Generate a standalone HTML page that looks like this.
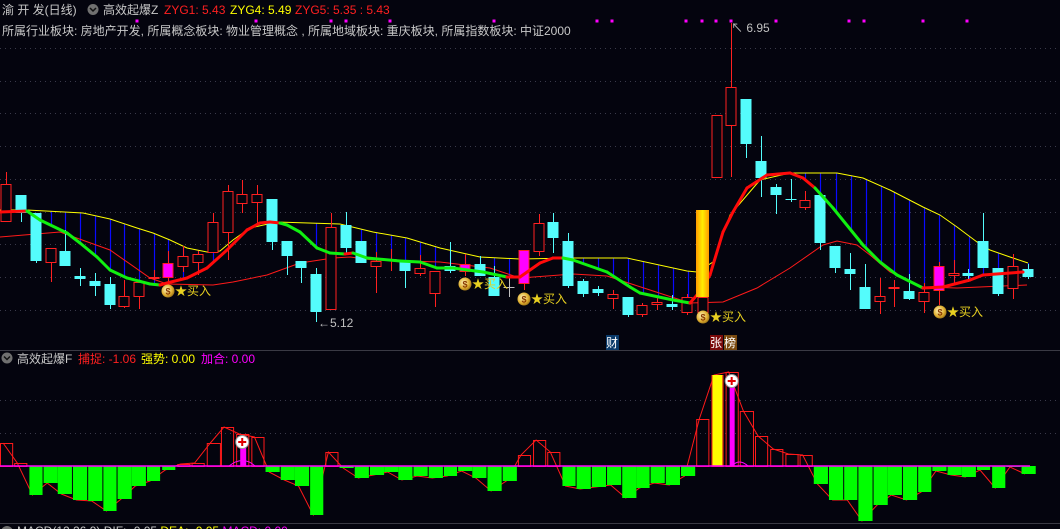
<!DOCTYPE html>
<html><head><meta charset="utf-8">
<style>
html,body{margin:0;padding:0;background:#04040e;width:1060px;height:529px;overflow:hidden}
svg{display:block}
text{font-family:"Liberation Sans","Noto Sans CJK SC",sans-serif}
</style></head>
<body>
<svg id="s" width="1060" height="529" viewBox="0 0 1060 529" xmlns="http://www.w3.org/2000/svg">
<defs>
<linearGradient id="og" x1="0" x2="1" y1="0" y2="0">
<stop offset="0" stop-color="#ff9a00"/><stop offset="0.5" stop-color="#ffee00"/><stop offset="1" stop-color="#ff9a00"/></linearGradient>
<radialGradient id="bag" cx="0.4" cy="0.4" r="0.7"><stop offset="0" stop-color="#fff6c0"/><stop offset="0.6" stop-color="#e0b030"/><stop offset="1" stop-color="#8a6010"/></radialGradient>
</defs>
<g id="grid" stroke="#3a3a4a" stroke-dasharray="1,4" stroke-width="1"></g>
<line x1="0" y1="350.5" x2="1060" y2="350.5" stroke="#3a3a44"/>
<line x1="0" y1="523.5" x2="1060" y2="523.5" stroke="#3a3a44"/>
<g id="g"></g>
<!-- header -->
<text x="2" y="14" font-size="12" fill="#c8c8c8">渝 开 发(日线)</text>
<circle cx="93" cy="9.5" r="5.5" fill="#707070"/><path d="M90 8 L93 11 L96 8" stroke="#111" stroke-width="1.5" fill="none"/>
<text x="103" y="14" font-size="12" fill="#c8c8c8">高效起爆Z</text>
<text x="164" y="14" font-size="12" fill="#ff2020">ZYG1: 5.43</text>
<text x="230" y="14" font-size="12" fill="#ffff00">ZYG4: 5.49</text>
<text x="295" y="14" font-size="12" fill="#ff2020">ZYG5: 5.35 : 5.43</text>
<text x="2" y="35" font-size="12" fill="#c8c8c8">所属行业板块: 房地产开发, 所属概念板块: 物业管理概念 , 所属地域板块: 重庆板块, 所属指数板块: 中证2000</text>
<circle cx="7" cy="358" r="5.5" fill="#707070"/><path d="M4 356.5 L7 359.5 L10 356.5" stroke="#111" stroke-width="1.5" fill="none"/>
<text x="17" y="363" font-size="12" fill="#c8c8c8">高效起爆F</text>
<text x="78" y="363" font-size="12" fill="#ff2020">捕捉: -1.06</text>
<text x="141" y="363" font-size="12" fill="#ffff00">强势: 0.00</text>
<text x="201" y="363" font-size="12" fill="#ff00ff">加合: 0.00</text>
<circle cx="7" cy="532" r="6" fill="#707070"/>
<text x="17" y="535" font-size="12" fill="#c8c8c8">MACD(12,26,9) DIF: -0.05 <tspan fill="#ffff00">DEA: -0.05</tspan> <tspan fill="#ff00ff">MACD: 0.00</tspan></text>
<!-- labels -->
<text x="318" y="327" font-size="12" fill="#c0c0c0">←5.12</text>
<text x="731" y="32" font-size="12" fill="#c0c0c0">↖ 6.95</text>
<rect x="606" y="335" width="13" height="15" fill="#0a3a6a"/><text x="606" y="347" font-size="12" fill="#fff">财</text>
<rect x="710" y="335" width="13" height="15" fill="#7a0a0a"/><text x="710" y="347" font-size="12" fill="#fff">张</text>
<rect x="724" y="335" width="13" height="15" fill="#7a4a10"/><text x="724" y="347" font-size="12" fill="#fff">榜</text>
</svg>
<script>
var NS="http://www.w3.org/2000/svg",G=document.getElementById('g'),GR=document.getElementById('grid');
function el(t,a,p){var e=document.createElementNS(NS,t);for(var k in a)e.setAttribute(k,a[k]);(p||G).appendChild(e);return e;}
[48,81,113,146,179,212,244,277,310,400,433].forEach(function(y){el('line',{x1:0,x2:1060,y1:y+.5,y2:y+.5},GR);});
function interp(P,x){for(var i=1;i<P.length;i++){if(x<=P[i][0]){var a=P[i-1],b=P[i];return a[1]+(b[1]-a[1])*(x-a[0])/(b[0]-a[0]);}}return P[P.length-1][1];}
var Y=[[0,210],[27,210],[83,213],[110,219],[137,228],[153,233],[170,240],[187,248],[207,252],[220,251],[233,240],[250,228],[277,222],[340,224],[373,232],[407,238],[440,248],[480,257],[520,259],[573,258],[627,258],[687,271],[697,272],[713,262],[730,215],[760,180],[790,173],[837,173],[863,178],[890,190],[923,207],[940,215],[957,227],[977,242],[990,250],[1010,257],[1028,263]];
var T=[[0,212,'r'],[27,211,'r'],[40,220,'g'],[67,233,'g'],[80,243,'g'],[97,257,'g'],[110,270,'g'],[127,278,'g'],[150,284,'g'],[160,285,'g'],[167,283,'r'],[187,278,'r'],[207,268,'r'],[227,250,'r'],[247,230,'r'],[260,223,'r'],[270,222,'r'],[280,223,'r'],[287,225,'g'],[300,232,'g'],[317,248,'g'],[330,253,'g'],[345,254,'g'],[353,253,'r'],[367,258,'g'],[400,261,'g'],[420,262,'g'],[437,268,'g'],[453,268,'g'],[483,272,'g'],[507,277,'g'],[520,277,'r'],[540,263,'r'],[553,258,'r'],[563,258,'r'],[573,260,'g'],[607,272,'g'],[630,287,'g'],[640,293,'g'],[673,300,'g'],[690,303,'g'],[697,295,'r'],[710,275,'r'],[723,232,'r'],[733,212,'r'],[747,188,'r'],[767,175,'r'],[790,173,'r'],[803,178,'r'],[815,188,'r'],[833,208,'g'],[863,245,'g'],[880,262,'g'],[897,275,'g'],[923,288,'g'],[943,287,'r'],[970,280,'r'],[983,275,'r'],[1023,272,'r']];
var R2=[[0,237],[60,232],[110,250],[150,278],[167,284],[213,285],[233,282],[267,275],[300,263],[333,258],[350,257],[373,260],[440,262],[490,268],[520,278],[547,276],[573,274],[607,276],[650,290],[690,303],[723,302],[757,288],[790,268],[823,245],[837,241],[857,245],[870,255],[890,272],[923,287],[957,288],[1027,285]];
var blue=[51,65,80,95,110,124,139,154,168,183,198,213,316,331,346,361,376,391,405,420,435,450,465,480,494,509,583,598,613,628,643,658,673,688,805,820,836,851,866,881,894,909,924,939,954,969,983,998,1013,1028];
blue.forEach(function(x){var y1=interp(Y,x),y2=interp(T,x);if(y2>y1+2)el('line',{x1:x+.5,x2:x+.5,y1:y1,y2:y2,stroke:'#0a0aff','stroke-width':1.2});});
el('polyline',{points:R2.map(function(p){return p.join(',')}).join(' '),fill:'none',stroke:'#ff1a1a','stroke-width':1});
el('polyline',{points:Y.map(function(p){return p.join(',')}).join(' '),fill:'none',stroke:'#ffff00','stroke-width':1});
var C=[[6,184,222,172,222,'r'],[21,195,213,195,222,'c'],[36,213,261,213,263,'c'],[51,248,263,248,282,'r'],[65,251,266,230,266,'c'],[80,276,279,268,286,'c'],[95,281,286,273,296,'c'],[110,284,305,277,309,'c'],[124,296,307,280,308,'r'],[139,282,297,282,309,'r'],[154,277,279,270,280,'r'],[168,263,278,251,285,'m'],[183,256,267,246,272,'r'],[198,254,263,251,275,'r'],[213,222,253,213,253,'r'],[228,191,233,185,260,'r'],[242,194,204,180,213,'r'],[257,194,203,185,223,'r'],[272,199,242,199,250,'c'],[287,241,256,241,275,'c'],[301,261,268,261,283,'c'],[316,274,312,268,322,'c'],[331,227,310,213,310,'r'],[346,225,248,212,253,'c'],[361,241,263,241,263,'c'],[376,261,267,252,293,'r'],[391,259,261,249,271,'r'],[405,261,271,261,288,'c'],[420,268,274,255,276,'r'],[435,271,294,271,307,'r'],[450,266,271,242,273,'c'],[465,264,272,254,276,'m'],[480,264,276,256,276,'c'],[494,277,296,266,296,'c'],[509,287,287,277,297,'xg'],[524,250,284,250,290,'m'],[539,223,252,214,256,'r'],[553,222,238,213,253,'c'],[568,241,286,233,288,'c'],[583,281,294,279,297,'c'],[598,289,293,286,296,'c'],[613,294,299,290,309,'r'],[628,297,315,297,317,'c'],[642,305,315,303,317,'r'],[657,302,305,298,310,'r'],[672,304,307,295,310,'c'],[687,297,313,294,315,'r'],[703,297,313,297,313,'r'],[717,115,178,115,178,'r'],[731,87,126,23,177,'r'],[746,99,144,99,158,'c'],[761,161,178,136,197,'c'],[776,187,195,184,214,'c'],[791,199,199,179,202,'xc'],[805,200,208,191,210,'r'],[820,195,243,195,250,'c'],[835,246,268,246,273,'c'],[850,269,274,253,290,'c'],[865,287,309,264,309,'c'],[880,296,302,278,314,'r'],[894,287,289,280,307,'r'],[909,291,299,274,300,'c'],[924,292,302,283,313,'r'],[939,266,291,262,305,'m'],[954,273,276,260,283,'r'],[968,273,276,269,282,'c'],[983,241,268,213,268,'c'],[998,268,294,268,296,'c'],[1013,266,289,254,299,'r'],[1028,269,277,264,279,'c']];
C.forEach(function(c){var x=c[0],t=c[5],w=5.5;
 if(t[0]=='x'){var col=t=='xg'?'#c0c0c0':'#54fcfc';el('line',{x1:x+.5,x2:x+.5,y1:c[3],y2:c[4],stroke:col});el('line',{x1:x-w,x2:x+w,y1:c[1]+.5,y2:c[1]+.5,stroke:col});return;}
 if(t=='c'){el('line',{x1:x+.5,x2:x+.5,y1:c[3],y2:c[4],stroke:'#54fcfc'});el('rect',{x:x-w,y:c[1],width:11,height:Math.max(2,c[2]-c[1]),fill:'#54fcfc'});}
 else{el('line',{x1:x+.5,x2:x+.5,y1:c[3],y2:c[1],stroke:'#ff2020'});el('line',{x1:x+.5,x2:x+.5,y1:c[2],y2:c[4],stroke:'#ff2020'});
  el('rect',{x:x-w+.5,y:c[1]+.5,width:10,height:Math.max(1,c[2]-c[1]-1),fill:t=='m'?'#ff00ff':'#04040e',stroke:'#ff2020','stroke-width':1});}
});
for(var i=1;i<T.length;i++){el('line',{x1:T[i-1][0],y1:T[i-1][1],x2:T[i][0],y2:T[i][1],stroke:T[i][2]=='r'?'#ff0a0a':'#10f010','stroke-width':3,'stroke-linecap':'round'});}
el('rect',{x:696,y:210,width:13,height:87,fill:'url(#og)'});
[137,256,331,346,390,494,597,612,686,702,716,731,776,849,864,923,967].forEach(function(x){el('rect',{x:x-1.5,y:19.5,width:3,height:3,fill:'#ff00ff'});});
[[168,291],[465,284],[524,299],[703,317],[940,312]].forEach(function(p){
 el('circle',{cx:p[0],cy:p[1],r:6.5,fill:'url(#bag)'});
 var t=el('text',{x:p[0],y:p[1]+3.5,'font-size':9,'text-anchor':'middle',fill:'#8a3a00','font-weight':'bold'});t.textContent='$';
 var s=el('text',{x:p[0]+7,y:p[1]+4,'font-size':12,fill:'#e8d020'});s.textContent='★买入';});
var Z=466,B=[[0,12,443,'r'],[14,26,463,'r'],[29,41,495,'g'],[43,56,483,'g'],[57,70,494,'g'],[72,85,500,'g'],[87,100,501,'g'],[102,114,511,'g'],[116,129,499,'g'],[130,143,486,'g'],[145,157,481,'g'],[160,172,470,'g'],[175,187,464,'r'],[189,201,463,'r'],[204,217,443,'r'],[218,230,427,'r'],[233,245,434,'r'],[248,260,437,'r'],[262,275,472,'g'],[277,290,480,'g'],[291,304,486,'g'],[306,318,515,'g'],[321,333,452,'r'],[335,348,468,'g'],[350,363,478,'g'],[365,378,475,'g'],[379,392,472,'g'],[393,406,480,'g'],[408,421,476,'g'],[423,436,478,'g'],[438,450,476,'g'],[452,465,471,'g'],[466,479,478,'g'],[481,494,491,'g'],[496,509,481,'g'],[511,523,455,'r'],[533,545,440,'r'],[547,559,452,'r'],[562,574,486,'g'],[576,589,489,'g'],[591,604,487,'g'],[606,619,485,'g'],[621,634,498,'g'],[635,647,488,'g'],[649,662,483,'g'],[664,677,485,'g'],[679,692,476,'g'],[694,706,419,'r'],[709,720,375,'r'],[723,735,372,'r'],[737,750,411,'r'],[752,764,436,'r'],[767,779,449,'r'],[782,794,454,'r'],[796,808,455,'r'],[810,823,484,'g'],[825,838,500,'g'],[840,852,500,'g'],[854,867,521,'g'],[869,882,505,'g'],[883,896,495,'g'],[898,911,500,'g'],[913,925,492,'g'],[927,940,471,'g'],[942,955,475,'g'],[956,969,477,'g'],[971,983,470,'g'],[986,998,488,'g'],[1000,1013,467,'g'],[1015,1028,474,'g']];
function fx(x){return x<530?x*1.0135:530+(x-530)*1.0135;}
B.forEach(function(b){b[0]=fx(b[0]);b[1]=fx(b[1]);});
el('polyline',{points:B.map(function(b){return ((b[0]+b[1])/2-3)+','+b[2]}).join(' '),fill:'none',stroke:'#ff1a1a','stroke-width':1});
B.forEach(function(b){var w=b[1]-b[0];
 if(b[3]=='g')el('rect',{x:b[0],y:Z,width:w+1,height:b[2]-Z,fill:'#00ff00'});
 else el('rect',{x:b[0]+.5,y:b[2]+.5,width:w,height:Z-b[2],fill:'none',stroke:'#ff1a1a','stroke-width':1});});
el('rect',{x:fx(710),y:375,width:10,height:91,fill:'#ffff00'});
el('rect',{x:fx(727),y:376,width:5,height:90,fill:'#ff00ff'});
el('rect',{x:fx(237),y:447,width:6,height:19,fill:'#ff00ff'});
el('path',{d:'M229 466 Q243 455 255 466 M732 466 Q739 458 748 466',fill:'none',stroke:'#ff00ff','stroke-width':1});
el('line',{x1:0,x2:1030,y1:466,y2:466,stroke:'#ff00ff','stroke-width':1.5});
[[fx(239),442],[fx(729),381]].forEach(function(p){el('circle',{cx:p[0],cy:p[1],r:6.5,fill:'#fff',stroke:'#999'});
 el('path',{d:'M'+(p[0]-4)+' '+p[1]+'h8M'+p[0]+' '+(p[1]-4)+'v8',stroke:'#e00000','stroke-width':2});});
</script>
</body></html>
